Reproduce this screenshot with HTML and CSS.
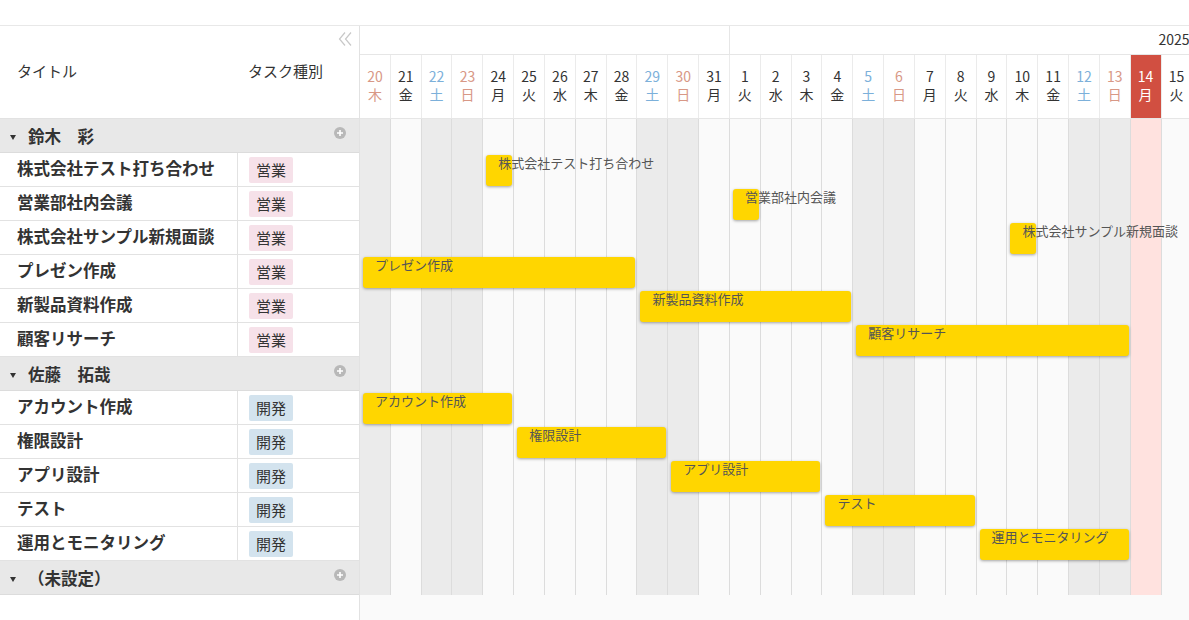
FILE: index.html
```html
<!DOCTYPE html>
<html lang="ja">
<head>
    <meta charset="utf-8">
    <title>ガントチャート</title>
    <link rel="stylesheet" href="styles.css">
</head>
<body>
    <div class="topbar"></div>
    <div class="gantt">
        <div class="side">
            <div class="side-head">
                <div class="head-title">タイトル</div>
                <div class="head-type">タスク種別</div>
                <svg class="collapse" width="16" height="16" viewBox="0 0 16 16">
                    <polyline points="8,1.5 2.5,8 8,14.5" fill="none" stroke="#c8c8c8" stroke-width="1.2"/>
                    <polyline points="14,1.5 8.5,8 14,14.5" fill="none" stroke="#c8c8c8" stroke-width="1.2"/>
                </svg>
            </div>

            <div class="group">
                <span class="caret"></span><span class="group-name">鈴木　彩</span>
                <svg class="add" width="12" height="12" viewBox="0 0 12 12"><circle cx="6" cy="6" r="6" fill="#b8b8b8"/><path d="M6 3v6M3 6h6" stroke="#fff" stroke-width="1.6"/></svg>
            </div>
            <div class="row"><div class="title">株式会社テスト打ち合わせ</div><div class="type"><span class="tag sales">営業</span></div></div>
            <div class="row"><div class="title">営業部社内会議</div><div class="type"><span class="tag sales">営業</span></div></div>
            <div class="row"><div class="title">株式会社サンプル新規面談</div><div class="type"><span class="tag sales">営業</span></div></div>
            <div class="row"><div class="title">プレゼン作成</div><div class="type"><span class="tag sales">営業</span></div></div>
            <div class="row"><div class="title">新製品資料作成</div><div class="type"><span class="tag sales">営業</span></div></div>
            <div class="row"><div class="title">顧客リサーチ</div><div class="type"><span class="tag sales">営業</span></div></div>

            <div class="group">
                <span class="caret"></span><span class="group-name">佐藤　拓哉</span>
                <svg class="add" width="12" height="12" viewBox="0 0 12 12"><circle cx="6" cy="6" r="6" fill="#b8b8b8"/><path d="M6 3v6M3 6h6" stroke="#fff" stroke-width="1.6"/></svg>
            </div>
            <div class="row"><div class="title">アカウント作成</div><div class="type"><span class="tag dev">開発</span></div></div>
            <div class="row"><div class="title">権限設計</div><div class="type"><span class="tag dev">開発</span></div></div>
            <div class="row"><div class="title">アプリ設計</div><div class="type"><span class="tag dev">開発</span></div></div>
            <div class="row"><div class="title">テスト</div><div class="type"><span class="tag dev">開発</span></div></div>
            <div class="row"><div class="title">運用とモニタリング</div><div class="type"><span class="tag dev">開発</span></div></div>

            <div class="group">
                <span class="caret"></span><span class="group-name">（未設定）</span>
                <svg class="add" width="12" height="12" viewBox="0 0 12 12"><circle cx="6" cy="6" r="6" fill="#b8b8b8"/><path d="M6 3v6M3 6h6" stroke="#fff" stroke-width="1.6"/></svg>
            </div>
        </div>

        <div class="chart">
            <div class="months">
                <div class="month march"></div>
                <div class="month april">2025年4月</div>
            </div>
            <div class="days">
                <div class="day holiday"><span>20</span><span>木</span></div>
                <div class="day"><span>21</span><span>金</span></div>
                <div class="day sat"><span>22</span><span>土</span></div>
                <div class="day sun"><span>23</span><span>日</span></div>
                <div class="day"><span>24</span><span>月</span></div>
                <div class="day"><span>25</span><span>火</span></div>
                <div class="day"><span>26</span><span>水</span></div>
                <div class="day"><span>27</span><span>木</span></div>
                <div class="day"><span>28</span><span>金</span></div>
                <div class="day sat"><span>29</span><span>土</span></div>
                <div class="day sun"><span>30</span><span>日</span></div>
                <div class="day"><span>31</span><span>月</span></div>
                <div class="day"><span>1</span><span>火</span></div>
                <div class="day"><span>2</span><span>水</span></div>
                <div class="day"><span>3</span><span>木</span></div>
                <div class="day"><span>4</span><span>金</span></div>
                <div class="day sat"><span>5</span><span>土</span></div>
                <div class="day sun"><span>6</span><span>日</span></div>
                <div class="day"><span>7</span><span>月</span></div>
                <div class="day"><span>8</span><span>火</span></div>
                <div class="day"><span>9</span><span>水</span></div>
                <div class="day"><span>10</span><span>木</span></div>
                <div class="day"><span>11</span><span>金</span></div>
                <div class="day sat"><span>12</span><span>土</span></div>
                <div class="day sun"><span>13</span><span>日</span></div>
                <div class="day today"><span>14</span><span>月</span></div>
                <div class="day"><span>15</span><span>火</span></div>
                <div class="day"><span>16</span><span>水</span></div>
            </div>

            <div class="chart-body">
                <div class="stripes">
                    <div class="stripe off"></div>
                    <div class="stripe"></div>
                    <div class="stripe off"></div>
                    <div class="stripe off"></div>
                    <div class="stripe"></div>
                    <div class="stripe"></div>
                    <div class="stripe"></div>
                    <div class="stripe"></div>
                    <div class="stripe"></div>
                    <div class="stripe off"></div>
                    <div class="stripe off"></div>
                    <div class="stripe"></div>
                    <div class="stripe"></div>
                    <div class="stripe"></div>
                    <div class="stripe"></div>
                    <div class="stripe"></div>
                    <div class="stripe off"></div>
                    <div class="stripe off"></div>
                    <div class="stripe"></div>
                    <div class="stripe"></div>
                    <div class="stripe"></div>
                    <div class="stripe"></div>
                    <div class="stripe"></div>
                    <div class="stripe off"></div>
                    <div class="stripe off"></div>
                    <div class="stripe today"></div>
                    <div class="stripe"></div>
                    <div class="stripe"></div>
                </div>

                <div class="bars">
                    <!-- 鈴木 彩 -->
                    <div class="bar" style="grid-row: 2; grid-column: 5 / span 1;">株式会社テスト打ち合わせ</div>
                    <div class="bar" style="grid-row: 3; grid-column: 13 / span 1;">営業部社内会議</div>
                    <div class="bar" style="grid-row: 4; grid-column: 22 / span 1;">株式会社サンプル新規面談</div>
                    <div class="bar" style="grid-row: 5; grid-column: 1 / span 9;">プレゼン作成</div>
                    <div class="bar" style="grid-row: 6; grid-column: 10 / span 7;">新製品資料作成</div>
                    <div class="bar" style="grid-row: 7; grid-column: 17 / span 9;">顧客リサーチ</div>
                    <!-- 佐藤 拓哉 -->
                    <div class="bar" style="grid-row: 9; grid-column: 1 / span 5;">アカウント作成</div>
                    <div class="bar" style="grid-row: 10; grid-column: 6 / span 5;">権限設計</div>
                    <div class="bar" style="grid-row: 11; grid-column: 11 / span 5;">アプリ設計</div>
                    <div class="bar" style="grid-row: 12; grid-column: 16 / span 5;">テスト</div>
                    <div class="bar" style="grid-row: 13; grid-column: 21 / span 5;">運用とモニタリング</div>
                </div>
            </div>
        </div>
    </div>
</body>
</html>
```

FILE: styles.css
```css
* {
    box-sizing: border-box;
}

body {
    margin: 0;
    height: 620px;
    overflow: hidden;
    background: #fff;
    color: #333;
    font-family: "Noto Sans CJK JP", "Noto Sans", sans-serif;
}

.topbar {
    height: 26px;
    border-bottom: 1px solid #e8e8e8;
}

.gantt {
    display: flex;
    height: 594px;
}

/* left side: task list */

.side {
    width: 360px;
    flex: none;
    border-right: 1px solid #e2e2e2;
}

.side-head {
    position: relative;
    height: 93px;
    display: grid;
    grid-template-columns: 238px 1fr;
    align-items: center;
    padding-bottom: 4px;
    border-bottom: 1px solid #e2e2e2;
    font-size: 15px;
}

.head-title {
    padding-left: 17px;
}

.head-type {
    padding-left: 10px;
}

.collapse {
    position: absolute;
    top: 5px;
    right: 6px;
}

.group {
    height: 34px;
    display: flex;
    align-items: center;
    padding-left: 10px;
    background: #e8e8e8;
    border-bottom: 1px solid #dcdcdc;
}

.caret {
    width: 0;
    height: 0;
    border-left: 3.5px solid transparent;
    border-right: 3.5px solid transparent;
    border-top: 5px solid #333;
    margin: 3px 12px 0 0;
}

.group-name {
    font-size: 16.5px;
    font-weight: bold;
}

.add {
    margin-left: auto;
    margin-right: 13px;
    align-self: flex-start;
    margin-top: 8px;
}

.row {
    height: 34px;
    display: grid;
    grid-template-columns: 238px 1fr;
    border-bottom: 1px solid #e2e2e2;
}

.title {
    display: flex;
    align-items: center;
    padding: 0 0 3px 17px;
    border-right: 1px solid #e2e2e2;
    font-size: 16.5px;
    font-weight: bold;
    white-space: nowrap;
}

.type {
    display: flex;
    align-items: center;
    padding-left: 11px;
}

.tag {
    height: 26px;
    line-height: 26px;
    padding: 0 7px;
    border-radius: 2px;
    font-size: 15px;
}

.tag.sales {
    background: #f6e1e9;
}

.tag.dev {
    background: #d3e3ee;
}

/* right side: timeline */

.chart {
    flex: 1;
    overflow: hidden;
    background: #fafafa;
}

.months,
.days {
    display: grid;
    grid-template-columns: repeat(28, 30.84px);
    grid-auto-columns: 30.84px;
    background: #fff;
    border-bottom: 1px solid #e6e6e6;
}

.months {
    height: 29px;
}

.month {
    border-right: 1px solid #e6e6e6;
    font-size: 14px;
    line-height: 26px;
    text-align: center;
    white-space: nowrap;
}

.march {
    grid-column: 1 / span 12;
}

.april {
    grid-column: 13 / span 30;
}

.days {
    height: 64px;
}

.day {
    display: flex;
    flex-direction: column;
    align-items: center;
    justify-content: center;
    padding-bottom: 3px;
    border-right: 1px solid #ebebeb;
    font-size: 14px;
    line-height: 18.5px;
}

.day.sat {
    color: #7cb0da;
}

.day.sun,
.day.holiday {
    color: #d89886;
}

.day.today {
    background: #d14f41;
    color: #fff;
}

.chart-body {
    display: grid;
}

.stripes,
.bars {
    grid-area: 1 / 1;
}

.stripes {
    display: flex;
    height: 476px;
}

.stripe {
    width: 30.84px;
    flex: none;
    background: #fafafa;
    border-right: 1px solid #dcdcdc;
}

.stripe.off {
    background: #ebebeb;
}

.stripe.today {
    background: #ffe2df;
}

.bars {
    display: grid;
    grid-template-columns: repeat(28, 30.84px);
    grid-template-rows: repeat(14, 34px);
}

.bar {
    margin: 2px 2px 1px 3px;
    padding-left: 12px;
    background: #ffd600;
    border-radius: 3px;
    box-shadow: 0 1px 3px rgba(0, 0, 0, 0.35);
    color: #555;
    font-size: 13px;
    line-height: 16px;
    white-space: nowrap;
}
```
